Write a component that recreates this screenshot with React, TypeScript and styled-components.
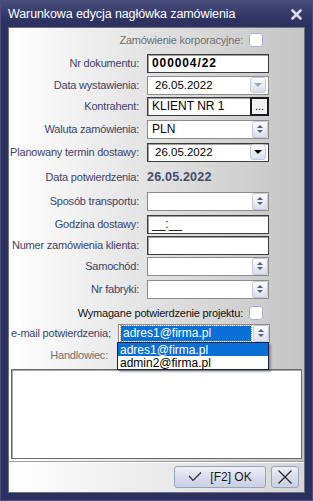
import React from 'react';
import styled, { createGlobalStyle, css } from 'styled-components';

const GlobalStyle = createGlobalStyle`
  html, body {
    margin: 0;
    padding: 0;
    background: #2c3160;
  }
  * {
    box-sizing: border-box;
  }
`;

const Window = styled.div`
  width: 313px;
  height: 501px;
  display: flex;
  flex-direction: column;
  padding: 0 7px 7px 7px;
  background: #2b305f;
  border: 1px solid #4a4f7c;
  font-family: 'Liberation Sans', Arial, sans-serif;
  overflow: hidden;
`;

const TitleBar = styled.div`
  height: 28px;
  margin: 0 -7px;
  padding: 0 10px 0 7px;
  display: flex;
  align-items: center;
  justify-content: space-between;
  background: linear-gradient(#474c7a, #2f3464 70%, #2b305f);
`;

const Title = styled.span`
  color: #ffffff;
  font-size: 12.5px;
  letter-spacing: -0.1px;
`;

const Client = styled.div`
  flex: 1;
  display: flex;
  flex-direction: column;
  border: 1px solid #6c6f86;
`;

const Form = styled.div`
  flex: 1;
  display: flex;
  flex-direction: column;
  padding: 0 2px 2px 1px;
  background: linear-gradient(to right, #ffffff 0%, #e4e4e4 45%, #c4c4c4 100%);
`;

const Row = styled.div<{ $mt?: number }>`
  position: relative;
  height: 22px;
  margin-top: ${p => p.$mt ?? 0}px;
  display: flex;
  align-items: center;
  gap: 8px;
`;

const Label = styled.div<{ $width: number; $tone?: 'blue' | 'gray' | 'black'; $left?: boolean }>`
  width: ${p => p.$width}px;
  flex-shrink: 0;
  text-align: ${p => (p.$left ? 'left' : 'right')};
  font-size: 11px;
  letter-spacing: -0.2px;
  white-space: nowrap;
  color: ${p => (p.$tone === 'gray' ? '#6e6e6e' : p.$tone === 'black' ? '#111111' : '#3d4266')};
`;

const Field = styled.div<{ $width?: number; $dark?: boolean }>`
  position: relative;
  width: ${p => p.$width ?? 122}px;
  height: 19px;
  display: flex;
  align-items: center;
  padding-left: 4px;
  background: #ffffff;
  border: 1px solid ${p => (p.$dark ? '#3c3c3c' : '#8c8c8c')};
  ${p =>
    p.$dark &&
    css`
      box-shadow: inset 1px 1px 0 #a0a0a0;
    `}
  font-size: 12px;
  color: #000000;
`;

const FieldText = styled.span<{ $bold?: boolean; $date?: boolean }>`
  flex: 1;
  white-space: nowrap;
  ${p =>
    p.$bold &&
    css`
      font-weight: bold;
      letter-spacing: 0.9px;
      font-size: 12px;
    `}
  ${p =>
    p.$date &&
    css`
      padding-left: 3px;
      font-size: 11.5px;
    `}
`;

const SideButton = styled.div<{ $kind: 'spin' | 'drop' }>`
  width: 16px;
  height: ${p => (p.$kind === 'drop' ? 16 : 17)}px;
  margin-right: ${p => (p.$kind === 'drop' ? 2 : 0)}px;
  display: flex;
  flex-direction: column;
  align-items: center;
  justify-content: center;
  gap: 2px;
  border: 1px solid #c4c8da;
  border-radius: ${p => (p.$kind === 'drop' ? 3 : 2)}px;
  background: linear-gradient(#fbfbfd, #dcdfea);
`;

const Arrow = styled.div<{ $up?: boolean; $color?: string; $size?: number }>`
  width: 0;
  height: 0;
  border-left: ${p => p.$size ?? 3}px solid transparent;
  border-right: ${p => p.$size ?? 3}px solid transparent;
  ${p =>
    p.$up
      ? css`border-bottom: ${p.$size ?? 3}px solid ${p.$color ?? '#5a5e78'};`
      : css`border-top: ${p.$size ?? 3}px solid ${p.$color ?? '#5a5e78'};`}
`;

const EllipsisButton = styled.div`
  width: 19px;
  height: 19px;
  margin: -1px -1px -1px 0;
  display: flex;
  align-items: flex-end;
  justify-content: center;
  padding-bottom: 2px;
  border: 2px solid #1a1a1a;
  background: #f0f0f0;
  font-size: 11px;
  line-height: 1;
`;

const StaticValue = styled.div`
  font-size: 12.5px;
  font-weight: bold;
  color: #464b6c;
  letter-spacing: 0.2px;
`;

const CheckBox = styled.div`
  width: 14px;
  height: 14px;
  margin-left: -2px;
  background: #ffffff;
  border: 1px solid #a9b0d6;
  border-radius: 3px;
`;

const Selection = styled.div`
  flex: 1;
  height: 15px;
  margin-right: 2px;
  margin-left: -2px;
  display: flex;
  align-items: center;
  padding-left: 2px;
  background: #0a6fd6;
  color: #ffffff;
  outline: 1px dotted #e8a040;
  font-size: 12px;
`;

const DropList = styled.div`
  position: absolute;
  top: 20px;
  left: 107px;
  width: 152px;
  background: #ffffff;
  border: 1px solid #1c1f45;
  box-shadow: 2px 2px 2px rgba(0, 0, 0, 0.3);
  z-index: 10;
`;

const DropItem = styled.div<{ $active?: boolean }>`
  height: 13px;
  display: flex;
  align-items: center;
  padding-left: 2px;
  font-size: 12px;
  color: ${p => (p.$active ? '#ffffff' : '#000000')};
  background: ${p => (p.$active ? '#0a6fd6' : 'transparent')};
`;

const Memo = styled.div`
  height: 90px;
  margin-top: 3px;
  margin-left: 1px;
  background: #ffffff;
  border: 1px solid #6a6a6a;
  box-shadow: inset 1px 1px 0 #a8a8a8;
`;

const ButtonBar = styled.div`
  height: 31px;
  display: flex;
  align-items: center;
  justify-content: flex-end;
  gap: 5px;
  padding: 0 5px 1px 0;
  border-top: 1px solid #9c9c9c;
  box-shadow: inset 0 1px 0 #ffffff;
  background: linear-gradient(to right, #ffffff, #d6d6d6);
`;

const DialogButton = styled.div<{ $width: number }>`
  width: ${p => p.$width}px;
  height: 22px;
  display: flex;
  align-items: center;
  justify-content: center;
  gap: 8px;
  border: 1px solid #9aa0c0;
  border-radius: 3px;
  background: linear-gradient(#eef0f8, #d6d9ea 60%, #ccd0e4);
  font-size: 12px;
  color: #1a1a1a;
`;

const TitleClose = () => (
  <svg width="11" height="11" viewBox="0 0 11 11">
    <path d="M1.5 1.5 L9.5 9.5 M9.5 1.5 L1.5 9.5" stroke="#d8dae8" strokeWidth="2.6" strokeLinecap="round" />
  </svg>
);

const CheckIcon = () => (
  <svg width="14" height="11" viewBox="0 0 14 11">
    <polyline points="1,5 5,9.5 13,1.5" fill="none" stroke="#2a2a2a" strokeWidth="1.2" />
  </svg>
);

const CrossIcon = () => (
  <svg width="16" height="16" viewBox="0 0 16 16">
    <path d="M1.5 1.5 L14.5 14.5 M14.5 1.5 L1.5 14.5" stroke="#2a2a2a" strokeWidth="1.3" />
  </svg>
);

const Spin = () => (
  <SideButton $kind="spin">
    <Arrow $up />
    <Arrow />
  </SideButton>
);

const Drop = ({ disabled }: { disabled?: boolean }) => (
  <SideButton $kind="drop">
    <Arrow $size={4} $color={disabled ? '#a4a6b4' : '#000000'} />
  </SideButton>
);

const LABEL_W = 129;

export default function App() {
  return (
    <>
      <GlobalStyle />
      <Window>
        <TitleBar>
          <Title>Warunkowa edycja nagłówka zamówienia</Title>
          <TitleClose />
        </TitleBar>
        <Client>
          <Form>
            <Row $mt={1}>
              <Label $width={233} $tone="gray">Zamówienie korporacyjne:</Label>
              <CheckBox />
            </Row>
            <Row $mt={1}>
              <Label $width={LABEL_W}>Nr dokumentu:</Label>
              <Field $dark>
                <FieldText $bold>000004/22</FieldText>
              </Field>
            </Row>
            <Row>
              <Label $width={LABEL_W}>Data wystawienia:</Label>
              <Field>
                <FieldText $date>26.05.2022</FieldText>
                <Drop disabled />
              </Field>
            </Row>
            <Row $mt={-1}>
              <Label $width={LABEL_W}>Kontrahent:</Label>
              <Field $dark>
                <FieldText>KLIENT NR 1</FieldText>
                <EllipsisButton>...</EllipsisButton>
              </Field>
            </Row>
            <Row $mt={1}>
              <Label $width={LABEL_W}>Waluta zamówienia:</Label>
              <Field>
                <FieldText>PLN</FieldText>
                <Spin />
              </Field>
            </Row>
            <Row $mt={1}>
              <Label $width={LABEL_W}>Planowany termin dostawy:</Label>
              <Field $dark>
                <FieldText $date>26.05.2022</FieldText>
                <Drop />
              </Field>
            </Row>
            <Row $mt={3}>
              <Label $width={LABEL_W}>Data potwierdzenia:</Label>
              <StaticValue>26.05.2022</StaticValue>
            </Row>
            <Row $mt={2}>
              <Label $width={LABEL_W}>Sposób transportu:</Label>
              <Field>
                <FieldText />
                <Spin />
              </Field>
            </Row>
            <Row $mt={1}>
              <Label $width={LABEL_W}>Godzina dostawy:</Label>
              <Field $dark>
                <FieldText>__:__</FieldText>
              </Field>
            </Row>
            <Row $mt={-1}>
              <Label $width={LABEL_W}>Numer zamówienia klienta:</Label>
              <Field $dark>
                <FieldText />
              </Field>
            </Row>
            <Row $mt={-1}>
              <Label $width={LABEL_W}>Samochód:</Label>
              <Field>
                <FieldText />
                <Spin />
              </Field>
            </Row>
            <Row $mt={1}>
              <Label $width={LABEL_W}>Nr fabryki:</Label>
              <Field>
                <FieldText />
                <Spin />
              </Field>
            </Row>
            <Row $mt={2}>
              <Label $width={233} $tone="black">Wymagane potwierdzenie projektu:</Label>
              <CheckBox />
            </Row>
            <Row $mt={-2}>
              <Label $width={100} $left style={{ paddingLeft: 1 }}>e-mail potwierdzenia;</Label>
              <Field $width={152}>
                <Selection>adres1@firma.pl</Selection>
                <Spin />
              </Field>
              <DropList>
                <DropItem $active>adres1@firma.pl</DropItem>
                <DropItem>admin2@firma.pl</DropItem>
              </DropList>
            </Row>
            <Row>
              <Label $width={98} $tone="gray">Handlowiec:</Label>
            </Row>
            <Memo />
          </Form>
          <ButtonBar>
            <DialogButton $width={92}>
              <CheckIcon />
              [F2] OK
            </DialogButton>
            <DialogButton $width={28}>
              <CrossIcon />
            </DialogButton>
          </ButtonBar>
        </Client>
      </Window>
    </>
  );
}
